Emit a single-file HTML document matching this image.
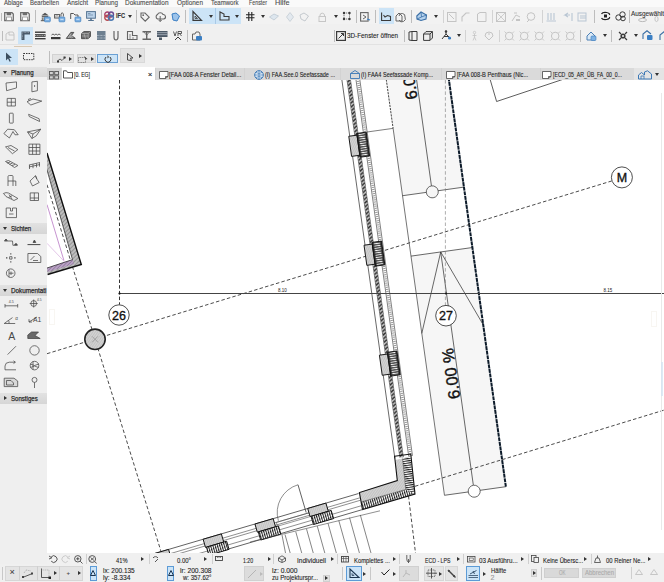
<!DOCTYPE html>
<html><head><meta charset="utf-8">
<style>
*{box-sizing:border-box}
html,body{margin:0;padding:0;width:664px;height:582px;overflow:hidden;background:#f0f0f0;font-family:"Liberation Sans",sans-serif;color:#222}
.a{position:absolute}
svg.a{overflow:visible}
#menu{left:0;top:0;width:664px;height:8px;background:#f9f9f9;font-size:6.6px;color:#555}
#menu span{position:absolute;top:-2px;white-space:nowrap}
#pal{left:0;top:66px;width:47px;height:498px;background:#efefef}
#draw{left:47px;top:80px;width:617px;height:473px;background:#fff;overflow:hidden}
</style></head><body>

<div class="a" style="left:0;top:44px;width:664px;height:1.2px;background:#e2e2e2"></div>
<div id="pal" class="a"></div>
<div id="draw" class="a"><svg width="617" height="473" viewBox="47 80 617 473" style="position:absolute;left:0;top:0"><defs>
<pattern id="hg" width="3" height="3" patternUnits="userSpaceOnUse" patternTransform="rotate(45)"><rect width="3" height="3" fill="#bdbdbd"/><line x1="0" y1="0" x2="0" y2="3" stroke="#555" stroke-width="0.8"/></pattern>
<pattern id="hd" width="9.6" height="2.3" patternUnits="userSpaceOnUse" x="7.3"><rect width="9.6" height="2.3" fill="#2a2a2a"/><rect x="1.6" y="0.6" width="6.4" height="1.1" fill="#f6f6f6"/></pattern>
<pattern id="hl" width="2" height="2" patternUnits="userSpaceOnUse" patternTransform="rotate(35)"><rect width="2" height="2" fill="#d4d4d4"/><line x1="0" y1="0" x2="0" y2="2" stroke="#999" stroke-width="0.6"/></pattern>
<pattern id="hdv" width="2.2" height="2.2" patternUnits="userSpaceOnUse"><rect width="2.2" height="2.2" fill="#fff"/><rect x="0" width="1.1" height="2.2" fill="#222"/></pattern>
<pattern id="hdR" width="2.2" height="2.2" patternUnits="userSpaceOnUse" patternTransform="rotate(-8)"><rect width="2.2" height="2.2" fill="#fff"/><rect y="0" width="2.2" height="1.1" fill="#222"/></pattern>
<pattern id="hdB" width="2.2" height="2.2" patternUnits="userSpaceOnUse" patternTransform="rotate(-16.4)"><rect width="2.2" height="2.2" fill="#fff"/><rect x="0" width="1.1" height="2.2" fill="#222"/></pattern>
<pattern id="rope" width="3.4" height="3.6" patternUnits="userSpaceOnUse" x="5.1"><rect width="3.4" height="3.6" fill="#c4c4c4"/><path d="M-0.5 3.2 L3.9 0.4" stroke="#2a2a2a" stroke-width="1.5"/></pattern>
<pattern id="hp" width="2.5" height="2.5" patternUnits="userSpaceOnUse" patternTransform="rotate(45)"><rect width="2.5" height="2.5" fill="#b9a3c4"/><line x1="0" y1="0" x2="0" y2="2.5" stroke="#6d4a7d" stroke-width="0.8"/></pattern>
</defs>
<g transform="translate(341.9,80) rotate(-7.97)">
<rect x="44" y="-20" width="62" height="143" fill="#f6f6f6"/>
<rect x="44" y="184" width="62" height="241.5" fill="#f6f6f6"/>
<line x1="44" y1="-20" x2="44" y2="55" stroke="#222" stroke-width="0.8" stroke-dasharray="2.2 1"/>
<line x1="44" y1="55" x2="44" y2="425.5" stroke="#444" stroke-width="0.7"/>
<line x1="44" y1="425.5" x2="106" y2="425.5" stroke="#333" stroke-width="0.7"/>
<line x1="44" y1="123" x2="106" y2="123" stroke="#333" stroke-width="0.7"/>
<line x1="44" y1="184" x2="106" y2="184" stroke="#333" stroke-width="0.7"/>
<line x1="74" y1="-20" x2="74" y2="117.3" stroke="#333" stroke-width="0.7"/>
<line x1="74" y1="184" x2="74" y2="419.5" stroke="#333" stroke-width="0.7"/>
<circle cx="74" cy="123.3" r="6" fill="#f6f6f6" stroke="#333" stroke-width="0.7"/>
<circle cx="74" cy="425.6" r="6" fill="#fff" stroke="#333" stroke-width="0.7"/>
<polyline points="44,262 74,184 106,262" fill="none" stroke="#333" stroke-width="0.7"/>
<line x1="106" y1="-20" x2="106" y2="425.5" stroke="#0d1b2a" stroke-width="2" stroke-dasharray="4 0.6"/>
<text transform="translate(73,306) rotate(-90)" font-size="16.4" fill="#111" stroke="#111" stroke-width="0.4" font-family="Liberation Sans" text-anchor="middle">6.00 %</text>
<text transform="translate(72.2,3.5) rotate(-90)" font-size="16.4" fill="#111" stroke="#111" stroke-width="0.4" font-family="Liberation Sans" text-anchor="middle">6.00 %</text>
</g>
<line x1="47" y1="353.7" x2="611.6" y2="181" stroke="#2a2a2a" stroke-width="0.85" stroke-dasharray="3.5 2.2"/>
<line x1="415" y1="486.3" x2="670" y2="408.3" stroke="#2a2a2a" stroke-width="0.85" stroke-dasharray="3.5 2.2"/>
<line x1="47" y1="184.7" x2="161.5" y2="553" stroke="#2a2a2a" stroke-width="0.85" stroke-dasharray="3.5 2.2"/>
<line x1="408.5" y1="496" x2="415.5" y2="553" stroke="#2a2a2a" stroke-width="0.85" stroke-dasharray="3.5 2.2"/>
<line x1="119.5" y1="80" x2="119.5" y2="304.7" stroke="#333" stroke-width="1" stroke-dasharray="3.5 2.2"/>
<line x1="445.4" y1="80" x2="445.4" y2="305.2" stroke="#777" stroke-width="0.6" stroke-dasharray="3.5 2.2"/>
<g transform="translate(341.9,80) rotate(-7.97)">
<line x1="0" y1="-20" x2="0" y2="382" stroke="#333" stroke-width="0.7"/>
<line x1="5.1" y1="-20" x2="5.1" y2="382" stroke="#444" stroke-width="0.7"/>
<line x1="8.5" y1="-20" x2="8.5" y2="382" stroke="#444" stroke-width="0.7"/>
<rect x="5.1" y="-20" width="3.4" height="402" fill="url(#rope)"/>
<line x1="14" y1="-20" x2="14" y2="382" stroke="#555" stroke-width="0.7"/>
<line x1="17.8" y1="-20" x2="17.8" y2="382" stroke="#555" stroke-width="0.7"/>
<line x1="15.9" y1="-20" x2="15.9" y2="382" stroke="#999" stroke-width="2.6" stroke-dasharray="1 1.1"/>
<rect x="-1" y="56.7" width="8.3" height="20.3" fill="url(#hl)" stroke="#111" stroke-width="0.9"/>
<rect x="7.3" y="55" width="9.6" height="24" fill="url(#hd)" stroke="#111" stroke-width="0.9"/>
<rect x="-1" y="166.7" width="8.3" height="20.3" fill="url(#hl)" stroke="#111" stroke-width="0.9"/>
<rect x="7.3" y="165" width="9.6" height="24" fill="url(#hd)" stroke="#111" stroke-width="0.9"/>
<rect x="-1" y="277.7" width="8.3" height="20.3" fill="url(#hl)" stroke="#111" stroke-width="0.9"/>
<rect x="7.3" y="276" width="9.6" height="24" fill="url(#hd)" stroke="#111" stroke-width="0.9"/>
<line x1="17.5" y1="55" x2="44" y2="55" stroke="#333" stroke-width="0.6"/>
</g>
<polygon points="395,460 402.5,458.5 405.8,489.5 361,502 359.4,492.6 397.3,480.5" fill="url(#hl)" stroke="none"/>
<polygon points="402.5,458.5 410.5,456.2 415,494.1 405.8,489.5" fill="url(#hdR)" stroke="none"/><polygon points="415,494.1 362.5,509.6 361,502 405.8,489.5" fill="url(#hdB)" stroke="none"/>
<polygon points="394.6,456.3 410.8,454 415,494.1 362.5,509.6 359.4,492.6 397.3,480.5" fill="none" stroke="#111" stroke-width="1.1"/>
<polyline points="402.5,458.5 405.8,489.5 361,502" fill="none" stroke="#333" stroke-width="0.5"/>
<g transform="translate(415,494.1) rotate(-16.4)">
<line x1="-300" y1="-16.5" x2="-54" y2="-16.5" stroke="#333" stroke-width="0.7"/>
<line x1="-300" y1="-12" x2="-54" y2="-12" stroke="#555" stroke-width="0.6"/>
<line x1="-300" y1="-9.5" x2="-54" y2="-9.5" stroke="#555" stroke-width="0.6"/>
<line x1="-300" y1="-4" x2="-54" y2="-4" stroke="#555" stroke-width="0.6"/>
<line x1="-300" y1="0" x2="-54" y2="0" stroke="#333" stroke-width="0.7"/>
<rect x="-107" y="-16.5" width="19" height="8.5" fill="url(#hl)" stroke="#111" stroke-width="0.9"/>
<rect x="-106" y="-8" width="21" height="8.5" fill="url(#hdv)" stroke="#111" stroke-width="0.9"/>
<rect x="-162" y="-16.5" width="19" height="8.5" fill="url(#hl)" stroke="#111" stroke-width="0.9"/>
<rect x="-161" y="-8" width="21" height="8.5" fill="url(#hdv)" stroke="#111" stroke-width="0.9"/>
<rect x="-216" y="-16.5" width="19" height="8.5" fill="url(#hl)" stroke="#111" stroke-width="0.9"/>
<rect x="-215" y="-8" width="21" height="8.5" fill="url(#hdv)" stroke="#111" stroke-width="0.9"/>
<rect x="-271" y="-16.5" width="19" height="8.5" fill="url(#hl)" stroke="#111" stroke-width="0.9"/>
<rect x="-270" y="-8" width="21" height="8.5" fill="url(#hdv)" stroke="#111" stroke-width="0.9"/>
<line x1="-109.6" y1="-13" x2="-109.6" y2="-42" stroke="#333" stroke-width="0.7"/>
<path d="M -109.6 -42 A 29 29 0 0 0 -138.6 -13" fill="none" stroke="#555" stroke-width="0.6"/>
<rect x="-141" y="-12" width="34" height="4" fill="none" stroke="#444" stroke-width="0.5"/>
</g>
<line x1="285" y1="534.5" x2="290.18" y2="553" stroke="#333" stroke-width="0.6"/>
<line x1="295.76" y1="531.7" x2="301.72" y2="553" stroke="#333" stroke-width="0.6"/>
<line x1="306.51" y1="528.9" x2="313.26" y2="553" stroke="#333" stroke-width="0.6"/>
<line x1="317.27" y1="526.1" x2="324.8" y2="553" stroke="#333" stroke-width="0.6"/>
<line x1="328.03" y1="523.3" x2="336.34" y2="553" stroke="#333" stroke-width="0.6"/>
<line x1="338.79" y1="520.5" x2="347.89" y2="553" stroke="#333" stroke-width="0.6"/>
<line x1="349.54" y1="517.7" x2="359.43" y2="553" stroke="#333" stroke-width="0.6"/>
<line x1="360.3" y1="514.9" x2="370.97" y2="553" stroke="#333" stroke-width="0.6"/>
<line x1="282" y1="535" x2="285.5" y2="553" stroke="#333" stroke-width="0.6"/>
<line x1="250" y1="542" x2="380" y2="510.8" stroke="#444" stroke-width="0.6"/>
<line x1="119.5" y1="293.5" x2="664" y2="293.5" stroke="#444" stroke-width="1"/>
<circle cx="119.5" cy="293.5" r="1.1" fill="#111"/><circle cx="446" cy="293.5" r="0.9" fill="#111"/>
<text x="282.5" y="292.2" font-size="4.5" fill="#222" font-family="Liberation Sans" text-anchor="middle">8.10</text>
<text x="608" y="292.2" font-size="4.5" fill="#222" font-family="Liberation Sans" text-anchor="middle">8.15</text>
<circle cx="119" cy="315" r="10.2" fill="#fff" stroke="#222" stroke-width="0.8"/>
<text x="119" y="319.5" font-size="12.5" fill="#111" stroke="#111" stroke-width="0.35" font-family="Liberation Sans" text-anchor="middle">26</text>
<circle cx="446" cy="315.7" r="10.3" fill="#fff" stroke="#222" stroke-width="0.8"/>
<text x="446" y="320.2" font-size="12.5" fill="#111" stroke="#111" stroke-width="0.35" font-family="Liberation Sans" text-anchor="middle">27</text>
<circle cx="621.9" cy="177.4" r="10.5" fill="#fff" stroke="#222" stroke-width="0.8"/>
<text x="621.9" y="182" font-size="12.5" fill="#111" stroke="#111" stroke-width="0.35" font-family="Liberation Sans" text-anchor="middle">M</text>
<circle cx="95" cy="339.3" r="10.2" fill="url(#hl)" stroke="#222" stroke-width="1.6"/>
<path d="M92 342.3 L98 336.3 M92 336.3 L98 342.3" stroke="#777" stroke-width="0.5"/>
<polyline points="489.7,78 496.6,101.5 567,78" fill="none" stroke="#333" stroke-width="0.8"/>
<polygon points="47,153 81.3,264.5 47.6,274.5 47,268 72.5,259.6 47,170" fill="url(#hg)"/>
<polygon points="47,268 72.5,259.6 74,264 47.6,272" fill="url(#hp)"/>
<polyline points="47,153 81.3,264.5 47.6,274.5" fill="none" stroke="#111" stroke-width="1.4"/>
<polyline points="47,170 72.5,259.6 47,268" fill="none" stroke="#222" stroke-width="0.7"/>
<line x1="47" y1="204.6" x2="63.9" y2="260.4" stroke="#a04ab0" stroke-width="0.6"/>
<line x1="47" y1="243.3" x2="64.8" y2="262" stroke="#d0a0d8" stroke-width="0.6"/>
<rect x="49.5" y="309.5" width="5" height="15" fill="none" stroke="#f1ece4" stroke-width="1" stroke-dasharray="1 1"/>
<rect x="651.5" y="311.5" width="5" height="15" fill="none" stroke="#f1ece4" stroke-width="1" stroke-dasharray="1 1"/>
<line x1="661.5" y1="93" x2="661.5" y2="530" stroke="#e9e9e9" stroke-width="1"/><line x1="662" y1="362" x2="662" y2="396" stroke="#d3e3f2" stroke-width="1.5"/></svg></div>
<div class="a" style="left:0px;top:0px;width:664px;height:7px;background:#fafafa"></div>
<div class="a" style="left:0px;top:7px;width:664px;height:17px;background:#f2f2f2"></div>
<div class="a" style="left:3.8px;top:-1.3px;font-size:7px;font-weight:normal;color:#4a4a4a;white-space:nowrap;line-height:1;-webkit-text-stroke:0.1px #4a4a4a;transform-origin:0 0;transform:scaleX(0.863);">Ablage</div>
<div class="a" style="left:30px;top:-1.3px;font-size:7px;font-weight:normal;color:#4a4a4a;white-space:nowrap;line-height:1;-webkit-text-stroke:0.1px #4a4a4a;transform-origin:0 0;transform:scaleX(0.856);">Bearbeiten</div>
<div class="a" style="left:66.5px;top:-1.3px;font-size:7px;font-weight:normal;color:#4a4a4a;white-space:nowrap;line-height:1;-webkit-text-stroke:0.1px #4a4a4a;transform-origin:0 0;transform:scaleX(0.914);">Ansicht</div>
<div class="a" style="left:95px;top:-1.3px;font-size:7px;font-weight:normal;color:#4a4a4a;white-space:nowrap;line-height:1;-webkit-text-stroke:0.1px #4a4a4a;transform-origin:0 0;transform:scaleX(0.895);">Planung</div>
<div class="a" style="left:125px;top:-1.3px;font-size:7px;font-weight:normal;color:#4a4a4a;white-space:nowrap;line-height:1;-webkit-text-stroke:0.1px #4a4a4a;transform-origin:0 0;transform:scaleX(0.924);">Dokumentation</div>
<div class="a" style="left:176.5px;top:-1.3px;font-size:7px;font-weight:normal;color:#4a4a4a;white-space:nowrap;line-height:1;-webkit-text-stroke:0.1px #4a4a4a;transform-origin:0 0;transform:scaleX(0.915);">Optionen</div>
<div class="a" style="left:211px;top:-1.3px;font-size:7px;font-weight:normal;color:#4a4a4a;white-space:nowrap;line-height:1;-webkit-text-stroke:0.1px #4a4a4a;transform-origin:0 0;transform:scaleX(0.862);">Teamwork</div>
<div class="a" style="left:248.5px;top:-1.3px;font-size:7px;font-weight:normal;color:#4a4a4a;white-space:nowrap;line-height:1;-webkit-text-stroke:0.1px #4a4a4a;transform-origin:0 0;transform:scaleX(0.758);">Fenster</div>
<div class="a" style="left:274.5px;top:-1.3px;font-size:7px;font-weight:normal;color:#4a4a4a;white-space:nowrap;line-height:1;-webkit-text-stroke:0.1px #4a4a4a;transform-origin:0 0;transform:scaleX(1.035);">Hilfe</div>
<div class="a" style="left:1px;top:12.5px;width:1px;height:8px;background:#bdbdbd"></div>
<svg class="a" style="left:4.1px;top:11.8px" width="10" height="9.2" viewBox="0 0 10 9.2"><path d="M0.7 0.7 H8 L9.3 2 V8.5 H0.7Z" fill="#f6f6f6" stroke="#6e6e6e" stroke-width="1.3"/><rect x="2.6" y="0.7" width="4.6" height="2.6" fill="#6e6e6e"/><rect x="2.6" y="5" width="4.8" height="3.5" fill="#fff" stroke="#8a8a8a" stroke-width="0.8"/></svg>
<svg class="a" style="left:20.3px;top:11.8px" width="10" height="9.2" viewBox="0 0 10 9.2"><path d="M0.7 0.7 H8 L9.3 2 V8.5 H0.7Z" fill="#f6f6f6" stroke="#6e6e6e" stroke-width="1.3"/><rect x="2.6" y="0.7" width="4.6" height="2.6" fill="#6e6e6e"/><rect x="2.6" y="5" width="4.8" height="3.5" fill="#fff" stroke="#8a8a8a" stroke-width="0.8"/></svg>
<div class="a" style="left:35px;top:9.5px;width:1px;height:13.5px;background:#bdbdbd"></div>
<svg class="a" style="left:40px;top:11.5px" width="10.5" height="10" viewBox="0 0 10.5 10"><path d="M1.5 3.2 L5 0.8 L8.5 3.2Z" fill="#555"/><rect x="1.8" y="3.6" width="6.5" height="1.6" fill="#666"/><path d="M2.3 5.5 V8.5 M4 5.5 V8.5" stroke="#555" stroke-width="0.9"/><rect x="0.8" y="8.2" width="4" height="1" fill="#555"/><rect x="4.5" y="5" width="5.8" height="4.8" rx="0.8" fill="#7fb2e3" stroke="#3c7cbd" stroke-width="0.7"/><path d="M5.8 7.4 h3.2" stroke="#fff" stroke-width="0.6"/></svg>
<svg class="a" style="left:54px;top:11.5px" width="11" height="10" viewBox="0 0 11 10"><rect x="0.6" y="2.6" width="5" height="3.4" fill="none" stroke="#555" stroke-width="1"/><path d="M1.5 5 L3 3.5 L4.5 5" stroke="#555" stroke-width="0.6" fill="none"/><path d="M7 4.5 V2 L8.2 0.6 L9.4 2 V4.5" fill="none" stroke="#555" stroke-width="0.9"/><rect x="5" y="5" width="5.8" height="4.8" rx="0.8" fill="#7fb2e3" stroke="#3c7cbd" stroke-width="0.7"/><path d="M6.3 7.4 h3.2" stroke="#fff" stroke-width="0.6"/></svg>
<svg class="a" style="left:70px;top:11.5px" width="11" height="10" viewBox="0 0 11 10"><path d="M0.7 7 V1.5 H3.5 L5 3 H8 V5" fill="none" stroke="#555" stroke-width="1"/><rect x="5" y="5" width="5.8" height="4.8" rx="0.8" fill="#7fb2e3" stroke="#3c7cbd" stroke-width="0.7"/><path d="M6.3 7.4 h3.2" stroke="#fff" stroke-width="0.6"/></svg>
<svg class="a" style="left:86px;top:11.3px" width="10" height="10.5" viewBox="0 0 10 10.5"><rect x="0.6" y="0.6" width="8.8" height="6.6" fill="#bcd3ea" stroke="#557391" stroke-width="1"/><path d="M2 2.5 H4.5 M2 4 H7" stroke="#557391" stroke-width="0.6"/><rect x="4.2" y="7.2" width="1.6" height="1.8" fill="#557391"/><rect x="2.2" y="9" width="5.6" height="1" fill="#557391"/></svg>
<div class="a" style="left:100.6px;top:9.5px;width:1px;height:13.5px;background:#bdbdbd"></div>
<svg class="a" style="left:104px;top:11.3px" width="10.5" height="10" viewBox="0 0 10.5 10"><circle cx="3.3" cy="3.5" r="2.5" fill="none" stroke="#a8406a" stroke-width="1.4"/><circle cx="7" cy="3.5" r="2.5" fill="none" stroke="#6a4a90" stroke-width="1.4"/><circle cx="3.3" cy="6.8" r="2.5" fill="none" stroke="#b84a50" stroke-width="1.4"/><circle cx="7" cy="6.8" r="2.5" fill="none" stroke="#4a78b0" stroke-width="1.4"/></svg>
<div class="a" style="left:116.4px;top:13px;font-size:7.15px;font-weight:bold;color:#333;white-space:nowrap;line-height:1;-webkit-text-stroke:0.1px #333;transform-origin:0 0;transform:scaleX(0.790);">IFC</div>
<svg class="a" style="left:128.2px;top:15px" width="4" height="3" viewBox="0 0 4 3"><path d="M0 0 L4 0 L2 3Z" fill="#333"/></svg>
<div class="a" style="left:135.7px;top:9.5px;width:1px;height:13.5px;background:#bdbdbd"></div>
<svg class="a" style="left:139.7px;top:11.5px" width="10" height="10" viewBox="0 0 10 10"><path d="M1 1 H5 L9.2 5.2 L5.2 9.2 L1 5Z" fill="none" stroke="#666" stroke-width="1.1"/><circle cx="3.2" cy="3.2" r="0.9" fill="#666"/></svg>
<svg class="a" style="left:154.8px;top:11.5px" width="10.5" height="10" viewBox="0 0 10.5 10"><path d="M2.5 7 A2.5 2.5 0 0 1 2.5 2.5 A3 3 0 0 1 8 2.5 A2.2 2.2 0 0 1 8.5 7Z" fill="none" stroke="#666" stroke-width="1.1"/><path d="M5.2 4 V9.5 M3.7 8 L5.2 9.5 L6.7 8" fill="none" stroke="#666" stroke-width="1"/></svg>
<svg class="a" style="left:170.6px;top:11.5px" width="10" height="10" viewBox="0 0 10 10"><path d="M1 2 L5 1 L8.5 4 L6 9 L2 8Z" fill="#9cc3ea" stroke="#3b7fc4" stroke-width="1"/></svg>
<div class="a" style="left:185.3px;top:9.5px;width:1px;height:13.5px;background:#bdbdbd"></div>
<div class="a" style="left:188.7px;top:8.3px;width:51.9px;height:15.3px;background:#cce4f7"></div>
<div class="a" style="left:214.7px;top:8.3px;width:1px;height:15.3px;background:#a9c9e6"></div>
<svg class="a" style="left:192px;top:11.3px" width="10.5" height="10" viewBox="0 0 10.5 10"><path d="M1 0.5 V9.3 H9.5Z" fill="none" stroke="#3a3a3a" stroke-width="1.2"/><path d="M3 5 V7.5 H5.5Z" fill="none" stroke="#3a3a3a" stroke-width="0.8"/></svg>
<svg class="a" style="left:208.6px;top:15px" width="4" height="3" viewBox="0 0 4 3"><path d="M0 0 L4 0 L2 3Z" fill="#333"/></svg>
<svg class="a" style="left:218.7px;top:11.3px" width="11" height="10" viewBox="0 0 11 10"><path d="M1 1 V9 H10 V5.5 H5 V3 Z" fill="none" stroke="#3a3a3a" stroke-width="1.1"/></svg>
<svg class="a" style="left:234.8px;top:15px" width="4" height="3" viewBox="0 0 4 3"><path d="M0 0 L4 0 L2 3Z" fill="#333"/></svg>
<svg class="a" style="left:245.6px;top:11.8px" width="8.5" height="9" viewBox="0 0 8.5 9"><path d="M2.8 0 V9 M5.8 0 V9 M0 2.8 H8.5 M0 5.8 H8.5" stroke="#222" stroke-width="1.1"/></svg>
<svg class="a" style="left:261.3px;top:15px" width="4" height="3" viewBox="0 0 4 3"><path d="M0 0 L4 0 L2 3Z" fill="#333"/></svg>
<svg class="a" style="left:269.3px;top:12px" width="10" height="9" viewBox="0 0 10 9"><path d="M0.5 5 L5 2 L9.5 4 L5 8Z" fill="#dde6ee" stroke="#bcc8d2" stroke-width="0.8"/></svg>
<svg class="a" style="left:286.3px;top:11.5px" width="8" height="10" viewBox="0 0 8 10"><path d="M4 0.5 L7.5 5 L4 9.5 L0.5 5Z" fill="#e3e9ef" stroke="#c3cbd3" stroke-width="0.8"/></svg>
<svg class="a" style="left:298.7px;top:11.5px" width="10.5" height="10" viewBox="0 0 10.5 10"><path d="M1 3 L5 1 L9.5 4 L6 9 L2 7Z" fill="none" stroke="#c4c9ce" stroke-width="1"/></svg>
<svg class="a" style="left:318px;top:11.5px" width="8.5" height="10" viewBox="0 0 8.5 10"><path d="M2 4.5 V3 A2.3 2.3 0 0 1 6.5 3 V4.5" fill="none" stroke="#c6c6c6" stroke-width="1"/><rect x="1" y="4.5" width="6.5" height="5" fill="none" stroke="#c6c6c6" stroke-width="1"/></svg>
<svg class="a" style="left:334px;top:15px" width="4" height="3" viewBox="0 0 4 3"><path d="M0 0 L4 0 L2 3Z" fill="#333"/></svg>
<svg class="a" style="left:341.6px;top:11.3px" width="9.5" height="10" viewBox="0 0 9.5 10"><rect x="2" y="2" width="5.5" height="6" fill="none" stroke="#666" stroke-width="0.9" stroke-dasharray="1.2 0.8"/><circle cx="2" cy="2" r="1.2" fill="#3a3a3a"/><circle cx="7.5" cy="2" r="1.2" fill="#3a3a3a"/><circle cx="2" cy="8" r="1.2" fill="#3a3a3a"/><circle cx="7.5" cy="8" r="1.2" fill="#3a3a3a"/></svg>
<div class="a" style="left:356.3px;top:9.5px;width:1px;height:13.5px;background:#bdbdbd"></div>
<svg class="a" style="left:359.7px;top:11.5px" width="10.5" height="10" viewBox="0 0 10.5 10"><rect x="0.6" y="0.6" width="7.5" height="8.5" fill="none" stroke="#666" stroke-width="1.1"/><path d="M3 3 L6 5 L3 7" fill="none" stroke="#666" stroke-width="1"/><path d="M7 7 L10 8" stroke="#3b7fc4" stroke-width="1.2"/></svg>
<div class="a" style="left:375.4px;top:9.5px;width:1px;height:13.5px;background:#bdbdbd"></div>
<div class="a" style="left:379px;top:8.3px;width:14.7px;height:15.3px;background:#cce4f7"></div>
<svg class="a" style="left:380.6px;top:11.8px" width="10" height="9" viewBox="0 0 10 9"><path d="M0.6 0.5 V8.5 H9.5 V4.5 L6.5 3.5 L4 5 L2.5 3" fill="none" stroke="#3a3a3a" stroke-width="1.1"/></svg>
<svg class="a" style="left:394.8px;top:11.5px" width="10.5" height="10" viewBox="0 0 10.5 10"><path d="M1 9 V4 L4 1 L7 4 V9Z M4 4 A3 3 0 0 1 10 5 A3 3 0 0 1 4 8" fill="none" stroke="#666" stroke-width="1"/></svg>
<div class="a" style="left:410.6px;top:9.5px;width:1px;height:13.5px;background:#bdbdbd"></div>
<svg class="a" style="left:416.3px;top:11.3px" width="11.5" height="10" viewBox="0 0 11.5 10"><path d="M0.8 5 L5 1 L10.5 4 L10 8 L5 9.5 L1 8Z" fill="#b5d2ee" stroke="#3a6fa6" stroke-width="1.1"/><path d="M5 1 L5.5 6 L10.5 4 M5.5 6 L1 8" fill="none" stroke="#3a6fa6" stroke-width="0.8"/></svg>
<svg class="a" style="left:433.5px;top:15px" width="4" height="3" viewBox="0 0 4 3"><path d="M0 0 L4 0 L2 3Z" fill="#333"/></svg>
<div class="a" style="left:443.4px;top:9.5px;width:1px;height:13.5px;background:#d3d3d3"></div>
<svg class="a" style="left:446.8px;top:11.5px" width="9.5" height="10" viewBox="0 0 9.5 10"><rect x="0.5" y="0.5" width="8.5" height="9" fill="none" stroke="#c4c4c4" stroke-width="1"/><path d="M2 2 L7 7" stroke="#c4c4c4"/></svg>
<svg class="a" style="left:461.4px;top:11.5px" width="9" height="10" viewBox="0 0 9 10"><path d="M1 9.5 V5 L5 1 H8.5" fill="none" stroke="#c4c4c4" stroke-width="1.1"/></svg>
<svg class="a" style="left:477.2px;top:11.5px" width="9.5" height="10" viewBox="0 0 9.5 10"><path d="M0.5 2 L3 0.5 H9 V9.5 H0.5Z" fill="none" stroke="#c4c4c4" stroke-width="1"/></svg>
<div class="a" style="left:492px;top:9.5px;width:1px;height:13.5px;background:#d3d3d3"></div>
<svg class="a" style="left:496.4px;top:11.5px" width="10" height="10" viewBox="0 0 10 10"><rect x="0.5" y="0.5" width="9" height="9" fill="none" stroke="#c4c4c4" stroke-width="1"/><path d="M0.5 0.5 L9.5 9.5 M9.5 0.5 L0.5 9.5" stroke="#c4c4c4" stroke-width="0.8"/></svg>
<svg class="a" style="left:511px;top:11.5px" width="10" height="10" viewBox="0 0 10 10"><path d="M1 9 L5 3 L9 5 M3 1 L6 1" fill="none" stroke="#c4c4c4" stroke-width="1"/><rect x="5" y="7" width="4" height="2" fill="#c4c4c4"/></svg>
<svg class="a" style="left:526.4px;top:11.5px" width="10" height="10" viewBox="0 0 10 10"><circle cx="5" cy="4.5" r="3.8" fill="none" stroke="#c4c4c4" stroke-width="1"/><path d="M3 8 L1 10" stroke="#c4c4c4" stroke-width="1"/></svg>
<div class="a" style="left:542.2px;top:9.5px;width:1px;height:13.5px;background:#d3d3d3"></div>
<svg class="a" style="left:545.6px;top:11.5px" width="10.5" height="10" viewBox="0 0 10.5 10"><path d="M2 1 V8 M5 1 V8 M8 1 V8 M0.5 9 H10" stroke="#b9c6d3" stroke-width="1.1"/></svg>
<svg class="a" style="left:562.6px;top:11.5px" width="10" height="10" viewBox="0 0 10 10"><path d="M9 1 V9 M7 3 H2 L5 1 M2 3 L5 5" fill="none" stroke="#b9c6d3" stroke-width="1.1"/></svg>
<svg class="a" style="left:577.2px;top:11.5px" width="10.5" height="10" viewBox="0 0 10.5 10"><rect x="1" y="1" width="8" height="8" fill="none" stroke="#b9c6d3" stroke-width="1"/><path d="M3 4 H9 M3 6 H9" stroke="#b9c6d3"/></svg>
<div class="a" style="left:594.2px;top:9.5px;width:1px;height:13.5px;background:#bdbdbd"></div>
<svg class="a" style="left:599.8px;top:11.3px" width="10.5" height="10" viewBox="0 0 10.5 10"><path d="M1.5 3 A4 2 0 0 1 9.5 4 M1.5 7 A4 2 0 0 0 9.5 6" fill="none" stroke="#222" stroke-width="1.2"/><rect x="4" y="3.5" width="3" height="3" fill="#222"/></svg>
<svg class="a" style="left:615.2px;top:11.3px" width="11.5" height="10.5" viewBox="0 0 11.5 10.5"><circle cx="3.5" cy="6.5" r="2.7" fill="none" stroke="#3a3a3a" stroke-width="1"/><circle cx="7.5" cy="3.5" r="2.7" fill="none" stroke="#3a3a3a" stroke-width="1"/><circle cx="8" cy="7.5" r="2.3" fill="none" stroke="#3a3a3a" stroke-width="1"/></svg>
<div class="a" style="left:629px;top:9.5px;width:1px;height:13.5px;background:#bdbdbd"></div>
<div class="a" style="left:631.4px;top:9.5px;font-size:7px;font-weight:normal;color:#333;white-space:nowrap;line-height:1;-webkit-text-stroke:0.1px #333;transform-origin:0 0;transform:scaleX(0.912);">Ausgewählt</div>
<svg class="a" style="left:638px;top:17.5px" width="9" height="4" viewBox="0 0 9 4"><ellipse cx="4.5" cy="2" rx="4" ry="1.6" fill="none" stroke="#aaa" stroke-width="0.8"/></svg>
<svg class="a" style="left:654px;top:16px" width="5" height="6" viewBox="0 0 5 6"><ellipse cx="2.5" cy="3" rx="1.6" ry="2.6" fill="none" stroke="#bbb" stroke-width="0.8"/></svg>
<div class="a" style="left:1.5px;top:31px;width:1px;height:10px;background:#bdbdbd"></div>
<svg class="a" style="left:4.5px;top:30.8px" width="10" height="9.5" viewBox="0 0 10 9.5"><path d="M1 3 L4 1 H8 L9 3 V9 H1Z M4 1 V4 H9" fill="none" stroke="#c2c2c2" stroke-width="0.9"/></svg>
<div class="a" style="left:18px;top:26.8px;width:15.4px;height:16.8px;background:#cce4f7"></div>
<svg class="a" style="left:21px;top:30.6px" width="9.5" height="9.5" viewBox="0 0 9.5 9.5"><path d="M0.5 0.5 H9 V3.5 H3.5 V9 H0.5Z" fill="#4a5a6a"/><path d="M1.5 1.5 H8 M1.5 2.5 V8" stroke="#dfe9f3" stroke-width="0.5" stroke-dasharray="0.7 0.7"/></svg>
<svg class="a" style="left:34.6px;top:31px" width="10.6" height="9" viewBox="0 0 10.6 9"><rect x="0" y="0.5" width="10.6" height="1.4" fill="#3a3a3a"/><rect x="0" y="3" width="10.6" height="3" fill="#555"/><path d="M0 4.5 H10.6" stroke="#ddd" stroke-width="0.6" stroke-dasharray="1 0.8"/><rect x="0" y="7" width="10.6" height="1.4" fill="#3a3a3a"/></svg>
<svg class="a" style="left:50.5px;top:31.5px" width="9.5" height="8" viewBox="0 0 9.5 8"><path d="M0.5 3 Q2 1 3.5 3 Q5 1 6.5 3 Q8 1 9.5 3" fill="none" stroke="#3a3a3a" stroke-width="0.8"/><rect x="0" y="5" width="9.5" height="2.2" fill="#3a3a3a"/></svg>
<svg class="a" style="left:66px;top:32px" width="10" height="7" viewBox="0 0 10 7"><path d="M0.3 6.4 L4.8 0.4 H7.8 L5.5 3.4 L9.3 6.4Z" fill="#8a8a8a" stroke="#333" stroke-width="0.8"/><path d="M2 6 L5 2 M3.8 6 L6 3.2 M5.5 6 L7 4.6" stroke="#ddd" stroke-width="0.5"/></svg>
<svg class="a" style="left:81.3px;top:31.3px" width="10" height="8.2" viewBox="0 0 10 8.2"><path d="M0.5 2.5 L3 0.5 H9.5 V5.5 L7.2 7.7 H0.5Z" fill="#6a6a6a" stroke="#333" stroke-width="0.7"/><path d="M0.5 2.5 H7.2 V7.7 M7.2 2.5 L9.5 0.5 M3 2.5 L4.5 7.7 M1 5 H7" fill="none" stroke="#cfcfcf" stroke-width="0.5"/></svg>
<svg class="a" style="left:97.3px;top:31px" width="8.5" height="9" viewBox="0 0 8.5 9"><rect x="0" y="0" width="8.5" height="9" fill="#6d7f90"/><path d="M0 4.5 H8.5" stroke="#dfe6ee" stroke-width="0.6" stroke-dasharray="0.8 0.6"/><path d="M0 7 H8.5" stroke="#dfe6ee" stroke-width="0.6" stroke-dasharray="0.8 0.6"/></svg>
<svg class="a" style="left:113px;top:30.6px" width="6" height="10" viewBox="0 0 6 10"><path d="M1 0 V6 Q1 9 3 9 Q5 9 5 6 V0" fill="none" stroke="#666" stroke-width="1.2"/></svg>
<svg class="a" style="left:126.6px;top:31px" width="10.5" height="9" viewBox="0 0 10.5 9"><path d="M0.5 0.5 H5.5 V4.5 H10 V8.5 H0.5Z" fill="none" stroke="#666" stroke-width="1.1"/><path d="M3 3 V8 M6 6 V8" stroke="#666" stroke-width="0.7"/></svg>
<svg class="a" style="left:142.4px;top:31px" width="9.5" height="9" viewBox="0 0 9.5 9"><path d="M0.5 0.8 H9 M0.5 8.2 H9 M4.7 0.8 V8.2" stroke="#666" stroke-width="1.4"/><path d="M2 0.8 L4.7 4.5 L7.5 0.8" fill="none" stroke="#666" stroke-width="0.7"/></svg>
<svg class="a" style="left:157px;top:31px" width="10.5" height="9" viewBox="0 0 10.5 9"><rect x="0" y="0" width="10.5" height="6" fill="#4c5967"/><rect x="0" y="1.5" width="10.5" height="0.6" fill="#cfd8e0"/><rect x="0" y="3.5" width="10.5" height="0.6" fill="#cfd8e0"/><rect x="2" y="6.5" width="3" height="2.5" fill="#4c5967"/></svg>
<svg class="a" style="left:172.9px;top:30.8px" width="9.5" height="9.5" viewBox="0 0 9.5 9.5"><path d="M0.5 0.5 L2 5 L3.5 0.5 M5 5 V0.5 H8.5 V2.5 H5 M6.5 2.5 L8.5 5" fill="none" stroke="#3a3a3a" stroke-width="0.8"/><path d="M2 9 L5 6 L8 9" fill="none" stroke="#3a3a3a" stroke-width="1"/></svg>
<div class="a" style="left:187px;top:30px;width:1px;height:12px;background:#bdbdbd"></div>
<svg class="a" style="left:192px;top:30.8px" width="10" height="9.5" viewBox="0 0 10 9.5"><path d="M0.5 3 H3 L4 1 H7 L8 3 V9 H0.5Z" fill="none" stroke="#666" stroke-width="1"/><rect x="4" y="5" width="6" height="4.5" rx="1" fill="#3b7fc4"/></svg>
<div class="a" style="left:333.7px;top:30px;width:1px;height:12px;background:#bdbdbd"></div>
<svg class="a" style="left:336px;top:30.6px" width="10" height="10" viewBox="0 0 10 10"><rect x="0.6" y="0.6" width="8.8" height="8.8" fill="none" stroke="#3a3a3a" stroke-width="1.2"/><path d="M2.5 7.5 L7.5 2.5 M5 2.5 H7.5 V5" fill="none" stroke="#3a3a3a" stroke-width="1"/></svg>
<div class="a" style="left:347.2px;top:33px;font-size:7.15px;font-weight:normal;color:#222;white-space:nowrap;line-height:1;-webkit-text-stroke:0.1px #222;transform-origin:0 0;transform:scaleX(0.888);">3D-Fenster öffnen</div>
<div class="a" style="left:403.9px;top:30px;width:1px;height:12px;background:#bdbdbd"></div>
<svg class="a" style="left:408.4px;top:30.6px" width="10" height="10" viewBox="0 0 10 10"><path d="M1 1 L4 0.5 H9 V9.5 H4 L1 9Z M4 0.5 V9.5" fill="none" stroke="#3a3a3a" stroke-width="1"/></svg>
<svg class="a" style="left:423px;top:30.6px" width="10" height="10" viewBox="0 0 10 10"><path d="M0.6 3 L3 0.6 H9.4 V7 L7 9.4 H0.6Z M0.6 3 H7 V9.4 M7 3 L9.4 0.6" fill="none" stroke="#3a3a3a" stroke-width="1"/></svg>
<svg class="a" style="left:441px;top:30.3px" width="11" height="10.5" viewBox="0 0 11 10.5"><path d="M5 0.5 V4 M1 9 L5 4 L10 9 M3 6.5 H8" fill="none" stroke="#3a3a3a" stroke-width="1"/><circle cx="5" cy="1.5" r="1.2" fill="#3a3a3a"/><circle cx="8.5" cy="8" r="1.6" fill="#3b7fc4"/></svg>
<svg class="a" style="left:457.2px;top:34px" width="4" height="3" viewBox="0 0 4 3"><path d="M0 0 L4 0 L2 3Z" fill="#333"/></svg>
<div class="a" style="left:464.8px;top:30px;width:1px;height:12px;background:#d3d3d3"></div>
<svg class="a" style="left:471.6px;top:30.5px" width="5" height="10" viewBox="0 0 5 10"><circle cx="2.5" cy="1.5" r="1.2" fill="none" stroke="#c4c4c4" stroke-width="0.8"/><path d="M2.5 3 V6 L1 9.5 M2.5 6 L4 9.5 M0.5 4.5 H4.5" fill="none" stroke="#c4c4c4" stroke-width="0.8"/></svg>
<svg class="a" style="left:484px;top:30.6px" width="10" height="10" viewBox="0 0 10 10"><path d="M1 5 A4 4 0 0 1 9 5 L5 9Z" fill="none" stroke="#c4c4c4" stroke-width="1"/><path d="M4 3 H6" stroke="#c4c4c4"/></svg>
<div class="a" style="left:498.7px;top:30px;width:1px;height:12px;background:#d3d3d3"></div>
<svg class="a" style="left:504px;top:30.6px" width="10.5" height="10" viewBox="0 0 10.5 10"><circle cx="5.2" cy="5" r="3.8" fill="none" stroke="#c4c4c4" stroke-width="1"/><path d="M2 2 L0.5 0.5 M8.5 2 L10 0.5 M2 8 L0.5 9.5 M8.5 8 L10 9.5" stroke="#c4c4c4" stroke-width="0.9"/></svg>
<svg class="a" style="left:518.5px;top:30.6px" width="10.5" height="10" viewBox="0 0 10.5 10"><circle cx="5.2" cy="5" r="3.8" fill="none" stroke="#c4c4c4" stroke-width="1"/><path d="M2 2 L0.5 0.5 M8.5 2 L10 0.5 M2 8 L0.5 9.5 M8.5 8 L10 9.5" stroke="#c4c4c4" stroke-width="0.9"/></svg>
<svg class="a" style="left:534.3px;top:30.6px" width="10.5" height="10" viewBox="0 0 10.5 10"><circle cx="5.2" cy="5" r="3.8" fill="none" stroke="#c4c4c4" stroke-width="1"/><path d="M2 2 L0.5 0.5 M8.5 2 L10 0.5 M2 8 L0.5 9.5 M8.5 8 L10 9.5" stroke="#c4c4c4" stroke-width="0.9"/></svg>
<svg class="a" style="left:550px;top:30.6px" width="10.5" height="10" viewBox="0 0 10.5 10"><circle cx="5.2" cy="5" r="3.8" fill="none" stroke="#c4c4c4" stroke-width="1"/><path d="M2 2 L0.5 0.5 M8.5 2 L10 0.5 M2 8 L0.5 9.5 M8.5 8 L10 9.5" stroke="#c4c4c4" stroke-width="0.9"/></svg>
<svg class="a" style="left:564.8px;top:30.6px" width="10.5" height="10" viewBox="0 0 10.5 10"><circle cx="5.2" cy="5" r="3.8" fill="none" stroke="#c4c4c4" stroke-width="1"/><path d="M2 2 L0.5 0.5 M8.5 2 L10 0.5 M2 8 L0.5 9.5 M8.5 8 L10 9.5" stroke="#c4c4c4" stroke-width="0.9"/></svg>
<div class="a" style="left:579.5px;top:30px;width:1px;height:12px;background:#bdbdbd"></div>
<svg class="a" style="left:586.3px;top:30.6px" width="10.5" height="10" viewBox="0 0 10.5 10"><path d="M1 5 L5 1 L9 5 V9 H1Z" fill="#dbe9f6" stroke="#4c80b5" stroke-width="1"/><rect x="5" y="5" width="5" height="4.5" rx="1" fill="#7fb2e3" stroke="#3c7cbd" stroke-width="0.6"/></svg>
<svg class="a" style="left:603px;top:34px" width="4" height="3" viewBox="0 0 4 3"><path d="M0 0 L4 0 L2 3Z" fill="#333"/></svg>
<div class="a" style="left:610.7px;top:30px;width:1px;height:12px;background:#bdbdbd"></div>
<svg class="a" style="left:617.8px;top:30.6px" width="10" height="10" viewBox="0 0 10 10"><path d="M1 1 L3 3 M9 1 L7 3 M1 9 L3 7 M9 9 L7 7" stroke="#3a3a3a" stroke-width="1.2"/><circle cx="5" cy="5" r="2.6" fill="#3a3a3a"/><circle cx="5" cy="5" r="1" fill="#f0f0f0"/></svg>
<svg class="a" style="left:634px;top:34px" width="4" height="3" viewBox="0 0 4 3"><path d="M0 0 L4 0 L2 3Z" fill="#333"/></svg>
<svg class="a" style="left:641.6px;top:30.3px" width="11" height="10.5" viewBox="0 0 11 10.5"><path d="M1 9 V4 L5 0.8 L9 4" fill="none" stroke="#3b6fa5" stroke-width="1.1"/><rect x="5" y="5" width="5.5" height="5" rx="1" fill="#3b7fc4"/></svg>
<svg class="a" style="left:658.5px;top:30.6px" width="8" height="10" viewBox="0 0 8 10"><path d="M1 9 V4 L5 0.8 L9 4" fill="none" stroke="#3b6fa5" stroke-width="1.1"/></svg>
<div class="a" style="left:13.5px;top:45.6px;width:18px;height:1px;background:#d8c9b4"></div>
<div class="a" style="left:0px;top:48.8px;width:18px;height:15.8px;background:#cce4f7"></div>
<svg class="a" style="left:5px;top:51.5px" width="8" height="10" viewBox="0 0 8 10"><path d="M1 0.5 L7 6 H4.2 L5.8 9.2 L4.6 9.7 L3 6.5 L1 8.5Z" fill="#3d4f60"/></svg>
<svg class="a" style="left:22.6px;top:53.3px" width="11.3" height="7.2" viewBox="0 0 11.3 7.2"><rect x="0.5" y="0.5" width="10.3" height="6.2" fill="none" stroke="#333" stroke-width="1" stroke-dasharray="1.5 1"/></svg>
<div class="a" style="left:49.2px;top:51px;width:1px;height:13px;background:#bdbdbd"></div>
<div class="a" style="left:52.4px;top:54.4px;width:22.1px;height:9px;background:#e3e3e3;border:1px solid #d2d2d2"></div>
<svg class="a" style="left:56.5px;top:55.5px" width="9" height="7" viewBox="0 0 9 7"><path d="M0.5 5 L3 3 L5 4.5 L8.5 1" fill="none" stroke="#3a3a3a" stroke-width="0.8"/><rect x="0" y="4.5" width="2" height="2" fill="#3a3a3a"/><rect x="6.5" y="0.5" width="2" height="2" fill="#3a3a3a"/></svg>
<svg class="a" style="left:69px;top:57px" width="3" height="4" viewBox="0 0 3 4"><path d="M0 0 L3 2 L0 4Z" fill="#333"/></svg>
<div class="a" style="left:76.8px;top:54.4px;width:19.2px;height:9px;background:#e3e3e3;border:1px solid #d2d2d2"></div>
<svg class="a" style="left:78px;top:55.5px" width="10" height="7" viewBox="0 0 10 7"><rect x="0.5" y="1.5" width="7" height="5" fill="none" stroke="#666" stroke-width="0.8" stroke-dasharray="1 0.7"/><path d="M6 0 L9.5 3 L7.5 3.5" fill="#3a3a3a"/></svg>
<svg class="a" style="left:91px;top:57px" width="3" height="4" viewBox="0 0 3 4"><path d="M0 0 L3 2 L0 4Z" fill="#333"/></svg>
<div class="a" style="left:97.1px;top:54.4px;width:20.8px;height:9px;background:#cce4f7;border:1px solid #6aa0d4"></div>
<svg class="a" style="left:104px;top:54.8px" width="8" height="8.5" viewBox="0 0 8 8.5"><path d="M2 2 A3 3 0 1 0 6 2" fill="none" stroke="#3a3a3a" stroke-width="1"/><path d="M3.5 0 L5 2 L3.5 3.5" fill="#3a3a3a"/></svg>
<div class="a" style="left:119.7px;top:48.3px;width:24.9px;height:15.1px;background:#e3e3e3;border:1px solid #d8d8d8"></div>
<svg class="a" style="left:126.8px;top:52.5px" width="6.5" height="8" viewBox="0 0 6.5 8"><path d="M0.5 0.5 L6 5 H3.5 L4.5 7.5 L0.5 7Z" fill="none" stroke="#3a3a3a" stroke-width="0.9"/></svg>
<svg class="a" style="left:138.8px;top:54px" width="3" height="4" viewBox="0 0 3 4"><path d="M0 0 L3 2 L0 4Z" fill="#333"/></svg>
<div class="a" style="left:0px;top:66.8px;width:47px;height:10.5px;background:linear-gradient(#e2e2e2,#d6d6d6)"></div>
<svg class="a" style="left:3px;top:70.6px" width="4" height="3" viewBox="0 0 4 3"><path d="M0 0 H4 L2 3Z" fill="#333"/></svg>
<div class="a" style="left:11px;top:68.8px;font-size:7px;font-weight:normal;color:#2a2a2a;white-space:nowrap;line-height:1;-webkit-text-stroke:0.1px #2a2a2a;transform-origin:0 0;transform:scaleX(0.879);-webkit-text-stroke:0.25px #2a2a2a">Planung</div>
<div class="a" style="left:0px;top:223.2px;width:47px;height:10.5px;background:linear-gradient(#e2e2e2,#d6d6d6)"></div>
<svg class="a" style="left:3px;top:227px" width="4" height="3" viewBox="0 0 4 3"><path d="M0 0 H4 L2 3Z" fill="#333"/></svg>
<div class="a" style="left:11px;top:225.2px;font-size:7px;font-weight:normal;color:#2a2a2a;white-space:nowrap;line-height:1;-webkit-text-stroke:0.1px #2a2a2a;transform-origin:0 0;transform:scaleX(0.865);-webkit-text-stroke:0.25px #2a2a2a">Sichten</div>
<div class="a" style="left:0px;top:285px;width:47px;height:10.5px;background:linear-gradient(#e2e2e2,#d6d6d6)"></div>
<svg class="a" style="left:3px;top:288.8px" width="4" height="3" viewBox="0 0 4 3"><path d="M0 0 H4 L2 3Z" fill="#333"/></svg>
<div class="a" style="left:11px;top:287px;font-size:7px;font-weight:normal;color:#2a2a2a;white-space:nowrap;line-height:1;-webkit-text-stroke:0.1px #2a2a2a;transform-origin:0 0;transform:scaleX(0.903);-webkit-text-stroke:0.25px #2a2a2a">Dokumentati</div>
<div class="a" style="left:0px;top:393px;width:47px;height:10.5px;background:linear-gradient(#e2e2e2,#d6d6d6)"></div>
<svg class="a" style="left:3.8px;top:396.3px" width="3" height="4" viewBox="0 0 3 4"><path d="M0 0 L3 2 L0 4Z" fill="#333"/></svg>
<div class="a" style="left:11px;top:395px;font-size:7px;font-weight:normal;color:#2a2a2a;white-space:nowrap;line-height:1;-webkit-text-stroke:0.1px #2a2a2a;transform-origin:0 0;transform:scaleX(0.868);-webkit-text-stroke:0.25px #2a2a2a">Sonstiges</div>
<svg class="a" style="left:0;top:0" width="47" height="400" viewBox="0 0 47 400" fill="none" stroke="#474747" stroke-width="0.75" stroke-linejoin="round">
<path d="M6 83 L16.5 81.9 V87.9 L6.6 90.7Z"/>
<path d="M31.9 81.9 L37.4 81.3 V90.7 L31.9 91.8Z M34.6 85 V87"/>
<rect x="7.2" y="98.4" width="8.2" height="7.6"/><path d="M11.3 98.4 V106 M7.2 102.2 H15.4"/>
<path d="M27 101.7 L33 99 L41.8 101.1 L30.8 105Z M29 100.8 L28.5 99.2 L31 98.6"/>
<rect x="9.4" y="113.2" width="3.8" height="9.9" rx="0.6"/>
<path d="M28.6 114.3 L39.1 118.7 L39.6 121.5 L29.2 116.5Z"/>
<path d="M3.9 133.6 L7.7 129.2 L14.3 129.7 L18.2 134.7 L15 134.8 L13 131.5 L9.4 138Z"/>
<path d="M27.5 131.9 L40.7 129.2 L36.3 135.8 L31.9 138.5Z M27.5 131.9 L33 134 L40.7 129.2 M33 134 L31.9 138.5"/>
<path d="M5.5 146.9 L11 145.5 L17.9 149.6 L12.4 153.7Z M8 147.5 L14.5 151"/>
<rect x="28.9" y="144.1" width="11" height="10.3"/><path d="M32.6 144.1 V154.4 M36.3 144.1 V154.4 M28.9 147.5 H39.9 M28.9 151 H39.9"/>
<path d="M5.5 161.5 L8.5 160.5 L17.9 165.5 L14.5 167.5Z M7 163 L10 162 M9.5 164.2 L12.5 163.2 M12 165.5 L15 164.5"/>
<path d="M28.9 165 L39.9 162.5 M28.9 167 L39.9 164.5 M29.5 165 V169 M33 164.2 V168.2 M36.5 163.4 V167.4 M39.5 162.6 V166.6"/>
<path d="M8 186 V176.5 Q8 175.5 9.5 175.5 H12 Q13 175.5 13 176.5 V181 H15.8 V186 M8 181 H13 M13 181 V186"/>
<path d="M35.5 175.7 L30 181 L32.5 186 L39.2 182.5 L36.8 179 Z M35.5 175.7 L36.8 179"/>
<path d="M3.4 193.5 Q6 192 8.5 193 L17.9 198.5 L14 200.5 L6 196.5 Q5 195 3.4 193.5Z M9 194.5 L12 199 M12 195.8 L8.5 197.5"/>
<rect x="30.2" y="192.9" width="8.3" height="7.6"/><path d="M34.3 192.9 V200.5 M30.2 198 H38.5"/>
<path d="M6.2 208 H10.5 V211 H12.5 V208 H16.5 V217.6 H6.2Z M9 214 H13.5"/>
<path d="M4.3 241 H12.5 L12.9 245.3 H17.6"/><path d="M4.6 240.6 L6 239 L7.3 240.6Z M14.5 244.9 L16 243.2 L17.3 244.9Z" fill="#474747"/>
<path d="M27.5 244.6 H40.4" stroke-width="1"/><path d="M33 242.5 L34.4 240 L35.8 242.5Z" fill="#474747"/>
<rect x="9.6" y="256.7" width="2.4" height="2.4"/><path d="M10.8 253.2 V254.6 M10.8 261.2 V262.6 M6 257.9 H7.4 M14.2 257.9 H15.6" stroke-width="1.1"/>
<path d="M27.9 262.5 V253.5 H37.5 L40.8 256.5 V262.5Z M30.5 260 L34.5 256 M33 260.5 H38"/>
<circle cx="10.7" cy="273.2" r="4.3"/><path d="M9 269.5 V277 M9 273.2 H13.5 M11 271.5 V275"/>
<path d="M5 305.8 H17.7 M5 304 V307.6 M17.7 304 V307.6"/><text x="11.3" y="302.6" font-size="3.6" fill="#474747" stroke="none" text-anchor="middle" font-family="Liberation Sans">4.5</text>
<circle cx="33.7" cy="303.5" r="2.9"/><path d="M33.7 299.5 V307.5 M29.7 303.5 H37.7"/><text x="37" y="301.2" font-size="3.3" fill="#474747" stroke="none" font-family="Liberation Sans">4.5</text>
<path d="M4.2 323.5 H15.2 M4.2 323.5 L12.5 317.6 M9 323.5 Q9.5 321.5 8.3 320.5"/><text x="15.2" y="319.5" font-size="4.6" fill="#474747" stroke="none" font-family="Liberation Sans">α</text>
<path d="M37 317 L29 322 M29 322 H32 M29 322 V319.2" stroke-width="0.8"/><text x="33" y="322" font-size="6.8" fill="#474747" stroke="none" font-family="Liberation Sans">A1</text>
<text x="11.8" y="339.6" font-size="10.5" fill="#474747" stroke="none" text-anchor="middle" font-family="Liberation Sans">A</text>
<path d="M27.8 338.5 V335 L31.5 332 H38.5 L35 335.5 L40.2 338.5Z" fill="#6a6a6a" stroke="#444"/>
<path d="M7.6 354.6 L16 346.2"/>
<circle cx="34.5" cy="350.4" r="4.7"/>
<path d="M5 369.8 V366 Q5.2 362.3 9.3 362.2 H15.2 M5 369.8 H16"/><path d="M13.5 360.8 L15.4 362.2 L13.5 363.6"/>
<circle cx="34.5" cy="365.6" r="4.3"/><path d="M30.3 364 Q34.5 367 38.8 364 M30.5 367.5 Q34.5 364.5 38.5 367.5 M33 361.5 V369.5"/>
<path d="M4.2 378.2 H14 L17.7 381 V386.6 H4.2Z" fill="#d8d8d8"/><path d="M6.5 380.5 H11 L13.5 383 V385 H6.5Z"/>
<circle cx="34.5" cy="379.9" r="2.5"/><path d="M34.5 382.4 V388"/>
</svg>
<div class="a" style="left:47px;top:67px;width:617px;height:13px;background:#f0f0f0"></div>
<div class="a" style="left:47px;top:67.8px;width:617px;height:12.2px;background:#dadada"></div>
<div class="a" style="left:47px;top:67.8px;width:13.5px;height:12.2px;background:#d2d2d2"></div>
<svg class="a" style="left:48.6px;top:70.6px" width="10" height="8.5" viewBox="0 0 10 8.5"><rect x="0.5" y="0.5" width="3.8" height="3.2" fill="none" stroke="#555" stroke-width="0.9"/><rect x="5.7" y="0.5" width="3.8" height="3.2" fill="none" stroke="#555" stroke-width="0.9"/><rect x="0.5" y="4.8" width="3.8" height="3.2" fill="none" stroke="#555" stroke-width="0.9"/><rect x="5.7" y="4.8" width="3.8" height="3.2" fill="none" stroke="#555" stroke-width="0.9"/></svg>
<div class="a" style="left:61.6px;top:67.2px;width:93.8px;height:12.8px;background:#ffffff"></div>
<svg class="a" style="left:63px;top:70.3px" width="10" height="8.5" viewBox="0 0 10 8.5"><path d="M0.5 8 V0.8 H3.5 L4.5 2.5 H9.5 V8Z" fill="none" stroke="#444" stroke-width="0.9"/></svg>
<div class="a" style="left:74px;top:71.6px;font-size:6.93px;font-weight:normal;color:#222;white-space:nowrap;line-height:1;-webkit-text-stroke:0.1px #222;transform-origin:0 0;transform:scaleX(0.743);">[0. EG]</div>
<div class="a" style="left:147.8px;top:70.6px;font-size:8px;font-weight:normal;color:#222;white-space:nowrap;line-height:1;-webkit-text-stroke:0.1px #222;">×</div>
<div class="a" style="left:155.4px;top:67.8px;width:89px;height:12.2px;background:#dadada;border-left:1px solid #d2d2d2"></div>
<div class="a" style="left:244.4px;top:67.8px;width:95.6px;height:12.2px;background:#dadada;border-left:1px solid #d2d2d2"></div>
<div class="a" style="left:340px;top:67.8px;width:101px;height:12.2px;background:#dadada;border-left:1px solid #d2d2d2"></div>
<div class="a" style="left:441px;top:67.8px;width:98.7px;height:12.2px;background:#dadada;border-left:1px solid #d2d2d2"></div>
<div class="a" style="left:539.7px;top:67.8px;width:94.3px;height:12.2px;background:#dadada;border-left:1px solid #d2d2d2"></div>
<div class="a" style="left:634px;top:67.8px;width:30px;height:12.2px;background:#e4e4e4"></div>
<svg class="a" style="left:158.5px;top:70.5px" width="9.5" height="8" viewBox="0 0 9.5 8"><path d="M0.5 0.5 H9 V5.5 L6.5 7.5 H0.5Z M6.5 7.5 V5.5 H9" fill="#fff" stroke="#444" stroke-width="0.8"/></svg>
<div class="a" style="left:168.8px;top:71.6px;font-size:6.93px;font-weight:normal;color:#222;white-space:nowrap;line-height:1;-webkit-text-stroke:0.1px #222;transform-origin:0 0;transform:scaleX(0.846);">[FAA 008-A Fenster Detail...</div>
<svg class="a" style="left:253.6px;top:69.6px" width="10" height="10" viewBox="0 0 10 10"><circle cx="5" cy="5" r="4.3" fill="#e8f1fa" stroke="#3c78b5" stroke-width="1"/><path d="M5 0.7 V9.3 M0.7 5 H9.3 M2 2.5 Q5 4.5 8 2.5 M2 7.5 Q5 5.5 8 7.5" fill="none" stroke="#3c78b5" stroke-width="0.7"/></svg>
<div class="a" style="left:264.6px;top:71.6px;font-size:6.93px;font-weight:normal;color:#222;white-space:nowrap;line-height:1;-webkit-text-stroke:0.1px #222;transform-origin:0 0;transform:scaleX(0.798);">(I) FAA.See.0 Seefassade ...</div>
<svg class="a" style="left:350.2px;top:69.8px" width="10" height="9" viewBox="0 0 10 9"><path d="M0.5 8.5 V3.5 L5 0.5 L9.5 3.5 V8.5Z M0.5 3.5 H9.5" fill="none" stroke="#3c78b5" stroke-width="0.9"/></svg>
<div class="a" style="left:360.7px;top:71.6px;font-size:6.93px;font-weight:normal;color:#222;white-space:nowrap;line-height:1;-webkit-text-stroke:0.1px #222;transform-origin:0 0;transform:scaleX(0.803);">(I) FAA4 Seefassade Komp...</div>
<svg class="a" style="left:446.3px;top:70.5px" width="9.5" height="8" viewBox="0 0 9.5 8"><path d="M0.5 0.5 H9 V5.5 L6.5 7.5 H0.5Z M6.5 7.5 V5.5 H9" fill="#fff" stroke="#444" stroke-width="0.8"/></svg>
<div class="a" style="left:456.6px;top:71.6px;font-size:6.93px;font-weight:normal;color:#222;white-space:nowrap;line-height:1;-webkit-text-stroke:0.1px #222;transform-origin:0 0;transform:scaleX(0.826);">[FAA 008-B Penthaus (Nic...</div>
<svg class="a" style="left:542.2px;top:70.5px" width="9.5" height="8" viewBox="0 0 9.5 8"><path d="M0.5 0.5 H9 V5.5 L6.5 7.5 H0.5Z M6.5 7.5 V5.5 H9" fill="#fff" stroke="#444" stroke-width="0.8"/></svg>
<div class="a" style="left:552.5px;top:71.6px;font-size:6.93px;font-weight:normal;color:#222;white-space:nowrap;line-height:1;-webkit-text-stroke:0.1px #222;transform-origin:0 0;transform:scaleX(0.747);">[ECD_05_AR_ÜB_FA_00_0...</div>
<svg class="a" style="left:637.5px;top:69.5px" width="15" height="10" viewBox="0 0 15 10"><path d="M0.5 9 V5 L3.5 2.5 L6.5 5 V2 L9.5 0.8 L13.5 4 V9Z" fill="none" stroke="#3c78b5" stroke-width="1"/><path d="M3 9 V6 H6 V9" fill="none" stroke="#3c78b5" stroke-width="0.8"/></svg>
<svg class="a" style="left:655px;top:72.5px" width="4" height="3" viewBox="0 0 4 3"><path d="M0 0 L4 0 L2 3Z" fill="#333"/></svg>
<div class="a" style="left:0px;top:553px;width:47px;height:11px;background:#efefef"></div>
<div class="a" style="left:47px;top:553px;width:617px;height:11px;background:#f0f0f0"></div>
<div class="a" style="left:0px;top:564px;width:664px;height:18px;background:#f0f0f0"></div>
<svg class="a" style="left:48.8px;top:555.2px" width="9" height="8" viewBox="0 0 9 8"><path d="M2.2 2 A3.3 3.3 0 1 1 2.2 6.2" fill="none" stroke="#444" stroke-width="0.9"/><path d="M0 1 L2.8 2.8 L0 4" fill="none" stroke="#444" stroke-width="0.9"/></svg>
<svg class="a" style="left:61px;top:555.2px" width="9" height="8" viewBox="0 0 9 8"><path d="M6.8 2 A3.3 3.3 0 1 0 6.8 6.2" fill="none" stroke="#c6c6c6" stroke-width="0.9"/><path d="M9 1 L6.2 2.8 L9 4" fill="none" stroke="#c6c6c6" stroke-width="0.9"/></svg>
<svg class="a" style="left:73.5px;top:555px" width="9" height="8.5" viewBox="0 0 9 8.5"><circle cx="3.8" cy="3.8" r="3.2" fill="none" stroke="#444" stroke-width="0.9"/><path d="M2.2 3.8 H5.4 M3.8 2.2 V5.4 M6.2 6.2 L8.5 8.5" stroke="#444" stroke-width="0.9"/></svg>
<div class="a" style="left:85.5px;top:554px;width:1px;height:9.5px;background:#cfcfcf"></div>
<svg class="a" style="left:88.3px;top:555px" width="9" height="8.5" viewBox="0 0 9 8.5"><circle cx="4.2" cy="4" r="3.4" fill="none" stroke="#444" stroke-width="0.9"/><path d="M2.5 2.5 L6 5.5 M6 2.5 L2.5 5.5 M6.8 6.8 L8.8 8.5" stroke="#444" stroke-width="0.8"/></svg>
<div class="a" style="left:115.5px;top:556.6px;font-size:7.04px;font-weight:normal;color:#222;white-space:nowrap;line-height:1;-webkit-text-stroke:0.1px #222;transform-origin:0 0;transform:scaleX(0.817);">41%</div>
<svg class="a" style="left:141.1px;top:556.5px" width="3" height="4" viewBox="0 0 3 4"><path d="M0 0 L3 2 L0 4Z" fill="#333"/></svg>
<div class="a" style="left:148.8px;top:554px;width:1px;height:9.5px;background:#cfcfcf"></div>
<svg class="a" style="left:152px;top:555.3px" width="7" height="7.5" viewBox="0 0 7 7.5"><path d="M1 3 A3 3 0 0 1 6 3 M3 7 L6 4" fill="none" stroke="#444" stroke-width="0.9"/></svg>
<div class="a" style="left:177px;top:556.6px;font-size:7.04px;font-weight:normal;color:#222;white-space:nowrap;line-height:1;-webkit-text-stroke:0.1px #222;transform-origin:0 0;transform:scaleX(0.848);">0.00°</div>
<svg class="a" style="left:204.1px;top:556.5px" width="3" height="4" viewBox="0 0 3 4"><path d="M0 0 L3 2 L0 4Z" fill="#333"/></svg>
<div class="a" style="left:211.5px;top:554px;width:1px;height:9.5px;background:#cfcfcf"></div>
<svg class="a" style="left:215.3px;top:556px" width="8" height="5" viewBox="0 0 8 5"><rect x="0.5" y="0.5" width="7" height="4" fill="none" stroke="#444" stroke-width="0.9"/><path d="M2.5 0.5 V2 M4 0.5 V2 M5.5 0.5 V2" stroke="#444" stroke-width="0.6"/></svg>
<div class="a" style="left:242.6px;top:556.6px;font-size:7.04px;font-weight:normal;color:#222;white-space:nowrap;line-height:1;-webkit-text-stroke:0.1px #222;transform-origin:0 0;transform:scaleX(0.745);">1:20</div>
<svg class="a" style="left:267.9px;top:556.5px" width="3" height="4" viewBox="0 0 3 4"><path d="M0 0 L3 2 L0 4Z" fill="#333"/></svg>
<div class="a" style="left:273.3px;top:554px;width:1px;height:9.5px;background:#cfcfcf"></div>
<svg class="a" style="left:278.4px;top:555px" width="8" height="8" viewBox="0 0 8 8"><path d="M0.5 3 L4 0.8 L7.5 3 V6 L4 7.5 L0.5 6Z M0.5 3 L4 5 L7.5 3 M4 5 V7.5" fill="none" stroke="#444" stroke-width="0.8"/></svg>
<div class="a" style="left:296.8px;top:556.6px;font-size:7.04px;font-weight:normal;color:#222;white-space:nowrap;line-height:1;-webkit-text-stroke:0.1px #222;transform-origin:0 0;transform:scaleX(0.927);">Individuell</div>
<svg class="a" style="left:331.2px;top:556.5px" width="3" height="4" viewBox="0 0 3 4"><path d="M0 0 L3 2 L0 4Z" fill="#333"/></svg>
<div class="a" style="left:336.5px;top:554px;width:1px;height:9.5px;background:#cfcfcf"></div>
<svg class="a" style="left:341px;top:555.8px" width="8" height="6.5" viewBox="0 0 8 6.5"><rect x="0.5" y="0.5" width="7" height="5.5" fill="none" stroke="#444" stroke-width="0.9"/><path d="M0.5 2.5 H7.5 M2.5 0.5 V6 M5 0.5 V6" stroke="#444" stroke-width="0.6"/></svg>
<div class="a" style="left:354px;top:556.6px;font-size:7.04px;font-weight:normal;color:#222;white-space:nowrap;line-height:1;-webkit-text-stroke:0.1px #222;transform-origin:0 0;transform:scaleX(0.833);">Komplettes ...</div>
<svg class="a" style="left:393.4px;top:556.5px" width="3" height="4" viewBox="0 0 3 4"><path d="M0 0 L3 2 L0 4Z" fill="#333"/></svg>
<div class="a" style="left:399px;top:554px;width:1px;height:9.5px;background:#cfcfcf"></div>
<svg class="a" style="left:405.5px;top:555px" width="5" height="8" viewBox="0 0 5 8"><path d="M0.8 0 V4 Q0.8 7 2.5 7 Q4.2 7 4.2 4 V0 M2.5 4 V8" fill="none" stroke="#444" stroke-width="0.8"/></svg>
<div class="a" style="left:424.5px;top:556.6px;font-size:7.04px;font-weight:normal;color:#222;white-space:nowrap;line-height:1;-webkit-text-stroke:0.1px #222;transform-origin:0 0;transform:scaleX(0.739);">ECD - LPS</div>
<svg class="a" style="left:456.9px;top:556.5px" width="3" height="4" viewBox="0 0 3 4"><path d="M0 0 L3 2 L0 4Z" fill="#333"/></svg>
<div class="a" style="left:463px;top:554px;width:1px;height:9.5px;background:#cfcfcf"></div>
<svg class="a" style="left:467px;top:555.8px" width="8.5" height="6.5" viewBox="0 0 8.5 6.5"><rect x="0.5" y="0.5" width="7.5" height="5.5" fill="none" stroke="#444" stroke-width="0.8"/><rect x="2.2" y="2" width="4" height="2.5" fill="none" stroke="#444" stroke-width="0.6"/></svg>
<div class="a" style="left:479.4px;top:556.6px;font-size:7.04px;font-weight:normal;color:#222;white-space:nowrap;line-height:1;-webkit-text-stroke:0.1px #222;transform-origin:0 0;transform:scaleX(0.890);">03 Ausführu...</div>
<svg class="a" style="left:520.5px;top:556.5px" width="3" height="4" viewBox="0 0 3 4"><path d="M0 0 L3 2 L0 4Z" fill="#333"/></svg>
<div class="a" style="left:527.6px;top:554px;width:1px;height:9.5px;background:#cfcfcf"></div>
<svg class="a" style="left:530.8px;top:555px" width="8" height="8" viewBox="0 0 8 8"><rect x="0.5" y="0.5" width="4.5" height="6" fill="none" stroke="#444" stroke-width="0.8"/><rect x="3" y="2.5" width="4.5" height="5" fill="#f0f0f0" stroke="#444" stroke-width="0.8"/></svg>
<div class="a" style="left:542.8px;top:556.6px;font-size:7.04px;font-weight:normal;color:#222;white-space:nowrap;line-height:1;-webkit-text-stroke:0.1px #222;transform-origin:0 0;transform:scaleX(0.834);">Keine Übersc...</div>
<svg class="a" style="left:583.5px;top:556.5px" width="3" height="4" viewBox="0 0 3 4"><path d="M0 0 L3 2 L0 4Z" fill="#333"/></svg>
<div class="a" style="left:590.5px;top:554px;width:1px;height:9.5px;background:#cfcfcf"></div>
<svg class="a" style="left:593.7px;top:555px" width="7" height="8" viewBox="0 0 7 8"><path d="M0.5 7.5 H6.5 L5 3 H2Z M3.5 3 V0.5" fill="none" stroke="#444" stroke-width="0.8"/></svg>
<div class="a" style="left:606.3px;top:556.6px;font-size:7.04px;font-weight:normal;color:#222;white-space:nowrap;line-height:1;-webkit-text-stroke:0.1px #222;transform-origin:0 0;transform:scaleX(0.835);">00 Reiner Ne...</div>
<svg class="a" style="left:647.5px;top:556.5px" width="3" height="4" viewBox="0 0 3 4"><path d="M0 0 L3 2 L0 4Z" fill="#333"/></svg>
<div class="a" style="left:1.5px;top:567px;width:1px;height:13px;background:#c8c8c8"></div>
<div class="a" style="left:4.5px;top:565.5px;width:78.5px;height:15.5px;background:#e4e4e4;border:1px solid #d6d6d6"></div>
<div class="a" style="left:18.5px;top:566px;width:1px;height:14px;background:#d0d0d0"></div>
<div class="a" style="left:36.5px;top:566px;width:1px;height:14px;background:#d0d0d0"></div>
<div class="a" style="left:58.5px;top:566px;width:1px;height:14px;background:#d0d0d0"></div>
<div class="a" style="left:9.5px;top:568.3px;font-size:9px;font-weight:normal;color:#444;white-space:nowrap;line-height:1;-webkit-text-stroke:0.1px #444;">×</div>
<svg class="a" style="left:22px;top:568.5px" width="11" height="9" viewBox="0 0 11 9"><path d="M0.5 8.5 L10.5 4.5" stroke="#444" stroke-width="0.9"/><path d="M2 4 L4 1 L9 2" fill="none" stroke="#999" stroke-width="0.7" stroke-dasharray="1 0.8"/><rect x="0" y="7" width="2" height="2" fill="#444"/><rect x="9" y="3.5" width="2" height="2" fill="#444"/></svg>
<svg class="a" style="left:40px;top:567.5px" width="11" height="11" viewBox="0 0 11 11"><path d="M1.5 0.5 V9.5 H10" fill="none" stroke="#444" stroke-width="0.9"/><path d="M1.5 2 H9 V9" fill="none" stroke="#999" stroke-width="0.6" stroke-dasharray="1 0.8"/><rect x="8.5" y="8.5" width="2.5" height="2.5" fill="#222"/></svg>
<svg class="a" style="left:53.5px;top:571px" width="3" height="4" viewBox="0 0 3 4"><path d="M0 0 L3 2 L0 4Z" fill="#333"/></svg>
<div class="a" style="left:66.5px;top:569.5px;font-size:6px;font-weight:normal;color:#444;white-space:nowrap;line-height:1;-webkit-text-stroke:0.1px #444;">+</div>
<svg class="a" style="left:77.5px;top:571px" width="3" height="4" viewBox="0 0 3 4"><path d="M0 0 L3 2 L0 4Z" fill="#333"/></svg>
<div class="a" style="left:89.5px;top:566px;width:7.5px;height:15px;background:#cce4f7;border:1px solid #5c9bd6"></div>
<svg class="a" style="left:90.3px;top:570px" width="6" height="6" viewBox="0 0 6 6"><path d="M3 0.5 L5.5 5.5 H0.5Z" fill="none" stroke="#1b3550" stroke-width="1"/></svg>
<div class="a" style="left:102.9px;top:567.8px;font-size:7.15px;font-weight:normal;color:#222;white-space:nowrap;line-height:1;-webkit-text-stroke:0.1px #222;transform-origin:0 0;transform:scaleX(0.907);">lx: 200.135</div>
<div class="a" style="left:102.9px;top:575.3px;font-size:7.15px;font-weight:normal;color:#222;white-space:nowrap;line-height:1;-webkit-text-stroke:0.1px #222;transform-origin:0 0;transform:scaleX(0.936);">ly: -8.334</div>
<div class="a" style="left:166.7px;top:566px;width:7.7px;height:15px;background:#cce4f7;border:1px solid #5c9bd6"></div>
<svg class="a" style="left:167.5px;top:570px" width="6" height="6" viewBox="0 0 6 6"><path d="M3 0.5 L5.5 5.5 H0.5Z" fill="none" stroke="#1b3550" stroke-width="1"/></svg>
<div class="a" style="left:180px;top:567.8px;font-size:7.15px;font-weight:normal;color:#222;white-space:nowrap;line-height:1;-webkit-text-stroke:0.1px #222;transform-origin:0 0;transform:scaleX(0.936);">lr: 200.308</div>
<div class="a" style="left:183.1px;top:575.3px;font-size:7.15px;font-weight:normal;color:#222;white-space:nowrap;line-height:1;-webkit-text-stroke:0.1px #222;transform-origin:0 0;transform:scaleX(0.842);">w: 357.62°</div>
<div class="a" style="left:243.8px;top:566px;width:20.5px;height:15px;background:#dcdcdc;border:1px solid #d0d0d0"></div>
<svg class="a" style="left:247px;top:568.5px" width="10" height="10" viewBox="0 0 10 10"><path d="M1 9 L9 1" stroke="#b5b5b5" stroke-width="1"/></svg>
<svg class="a" style="left:259.5px;top:571.5px" width="3" height="4" viewBox="0 0 3 4"><path d="M0 0 L3 2 L0 4Z" fill="#bbb"/></svg>
<div class="a" style="left:272px;top:567.8px;font-size:7.15px;font-weight:normal;color:#222;white-space:nowrap;line-height:1;-webkit-text-stroke:0.1px #222;transform-origin:0 0;transform:scaleX(0.948);">lz: 0.000</div>
<div class="a" style="left:272px;top:575.3px;font-size:7.15px;font-weight:normal;color:#222;white-space:nowrap;line-height:1;-webkit-text-stroke:0.1px #222;transform-origin:0 0;transform:scaleX(0.859);">zu Projekturspr...</div>
<div class="a" style="left:323.2px;top:574.5px;width:6.5px;height:7px;background:#e0e0e0;border:1px solid #cfcfcf"></div>
<svg class="a" style="left:325px;top:576px" width="3" height="4" viewBox="0 0 3 4"><path d="M0 0 L3 2 L0 4Z" fill="#333"/></svg>
<div class="a" style="left:342.4px;top:567px;width:1px;height:13px;background:#c8c8c8"></div>
<div class="a" style="left:346.2px;top:566px;width:15.4px;height:15px;background:#cce4f7;border:1px solid #5c9bd6"></div>
<svg class="a" style="left:348.5px;top:568px" width="11" height="10.5" viewBox="0 0 11 10.5"><path d="M1 1 V9.5 H10Z" fill="none" stroke="#1b3550" stroke-width="1.1"/><path d="M3 5.5 V7.5 H5Z" fill="none" stroke="#1b3550" stroke-width="0.7"/></svg>
<svg class="a" style="left:362.8px;top:571.5px" width="3" height="4" viewBox="0 0 3 4"><path d="M0 0 L3 2 L0 4Z" fill="#333"/></svg>
<div class="a" style="left:370px;top:567px;width:1px;height:13px;background:#c8c8c8"></div>
<svg class="a" style="left:380.8px;top:569px" width="9" height="7" viewBox="0 0 9 7"><path d="M0.5 3 L3 6 L8.5 0.5" fill="none" stroke="#222" stroke-width="1"/></svg>
<svg class="a" style="left:392.9px;top:571.5px" width="3" height="4" viewBox="0 0 3 4"><path d="M0 0 L3 2 L0 4Z" fill="#333"/></svg>
<div class="a" style="left:399px;top:566px;width:20.4px;height:15px;background:#dcdcdc;border:1px solid #d0d0d0"></div>
<svg class="a" style="left:402px;top:568.5px" width="9" height="9" viewBox="0 0 9 9"><path d="M1 8 L4 4 L8 6 M4 4 V1" fill="none" stroke="#b9b9b9" stroke-width="1"/></svg>
<div class="a" style="left:423.5px;top:566px;width:20.3px;height:15px;background:#e4e4e4;border:1px solid #d6d6d6"></div>
<svg class="a" style="left:425.5px;top:568px" width="11" height="10.5" viewBox="0 0 11 10.5"><rect x="2" y="2" width="7" height="6.5" fill="none" stroke="#444" stroke-width="0.7" stroke-dasharray="1 0.7"/><path d="M5.5 0 V10.5 M0 5.2 H11" stroke="#444" stroke-width="0.9"/></svg>
<svg class="a" style="left:438.5px;top:571.5px" width="3" height="4" viewBox="0 0 3 4"><path d="M0 0 L3 2 L0 4Z" fill="#333"/></svg>
<div class="a" style="left:444.8px;top:566px;width:13.2px;height:15px;background:#e4e4e4;border:1px solid #d6d6d6"></div>
<svg class="a" style="left:446.5px;top:568.5px" width="10" height="10" viewBox="0 0 10 10"><path d="M1 1 L8.5 8.5" stroke="#444" stroke-width="1.4"/><path d="M1 3 L3 1 M6 8 L8 6" stroke="#444" stroke-width="0.8"/></svg>
<div class="a" style="left:466px;top:566px;width:14.4px;height:15px;background:#cce4f7;border:1px solid #5c9bd6"></div>
<svg class="a" style="left:468px;top:568.5px" width="10.5" height="10" viewBox="0 0 10.5 10"><path d="M0.5 6.5 H10 M0.5 8.5 H10" stroke="#1b3550" stroke-width="0.7"/><path d="M2 5 L8.5 1.5 M5 2 L6.5 5" stroke="#1b3550" stroke-width="0.8"/></svg>
<svg class="a" style="left:482.9px;top:571.5px" width="3" height="4" viewBox="0 0 3 4"><path d="M0 0 L3 2 L0 4Z" fill="#333"/></svg>
<div class="a" style="left:490.5px;top:567.8px;font-size:7.15px;font-weight:normal;color:#222;white-space:nowrap;line-height:1;-webkit-text-stroke:0.1px #222;transform-origin:0 0;transform:scaleX(0.820);">Hälfte</div>
<div class="a" style="left:490.5px;top:575.3px;font-size:7.15px;font-weight:normal;color:#999;white-space:nowrap;line-height:1;-webkit-text-stroke:0.1px #999;">2</div>
<div class="a" style="left:530.8px;top:569px;width:6.2px;height:8px;background:#e0e0e0;border:1px solid #cfcfcf"></div>
<svg class="a" style="left:532.5px;top:571px" width="3" height="4" viewBox="0 0 3 4"><path d="M0 0 L3 2 L0 4Z" fill="#333"/></svg>
<div class="a" style="left:540.6px;top:567px;width:1px;height:13px;background:#c8c8c8"></div>
<div class="a" style="left:544.3px;top:568px;width:34.7px;height:10.4px;background:#d9d9d9;border:1px solid #cfcfcf"></div>
<div class="a" style="left:559px;top:570.4px;font-size:6.9px;font-weight:normal;color:#aaa;white-space:nowrap;line-height:1;-webkit-text-stroke:0.1px #aaa;transform-origin:0 0;transform:scaleX(0.652);">OK</div>
<div class="a" style="left:581.8px;top:568px;width:34.7px;height:10.4px;background:#d9d9d9;border:1px solid #cfcfcf"></div>
<div class="a" style="left:584.6px;top:570.4px;font-size:6.9px;font-weight:normal;color:#aaa;white-space:nowrap;line-height:1;-webkit-text-stroke:0.1px #aaa;transform-origin:0 0;transform:scaleX(0.870);">Abbrechen</div>
<div class="a" style="left:630.6px;top:567px;width:1px;height:12px;background:#cfcfcf"></div>
<svg class="a" style="left:635px;top:569px" width="8" height="6" viewBox="0 0 8 6"><path d="M0.5 5.5 L4 0.5 L7.5 5.5Z" fill="none" stroke="#bbb" stroke-width="0.8"/></svg>
<svg class="a" style="left:650px;top:569px" width="8" height="6" viewBox="0 0 8 6"><path d="M0.5 5.5 L4 0.5 L7.5 5.5Z" fill="none" stroke="#bbb" stroke-width="0.8"/></svg>
</body></html>
